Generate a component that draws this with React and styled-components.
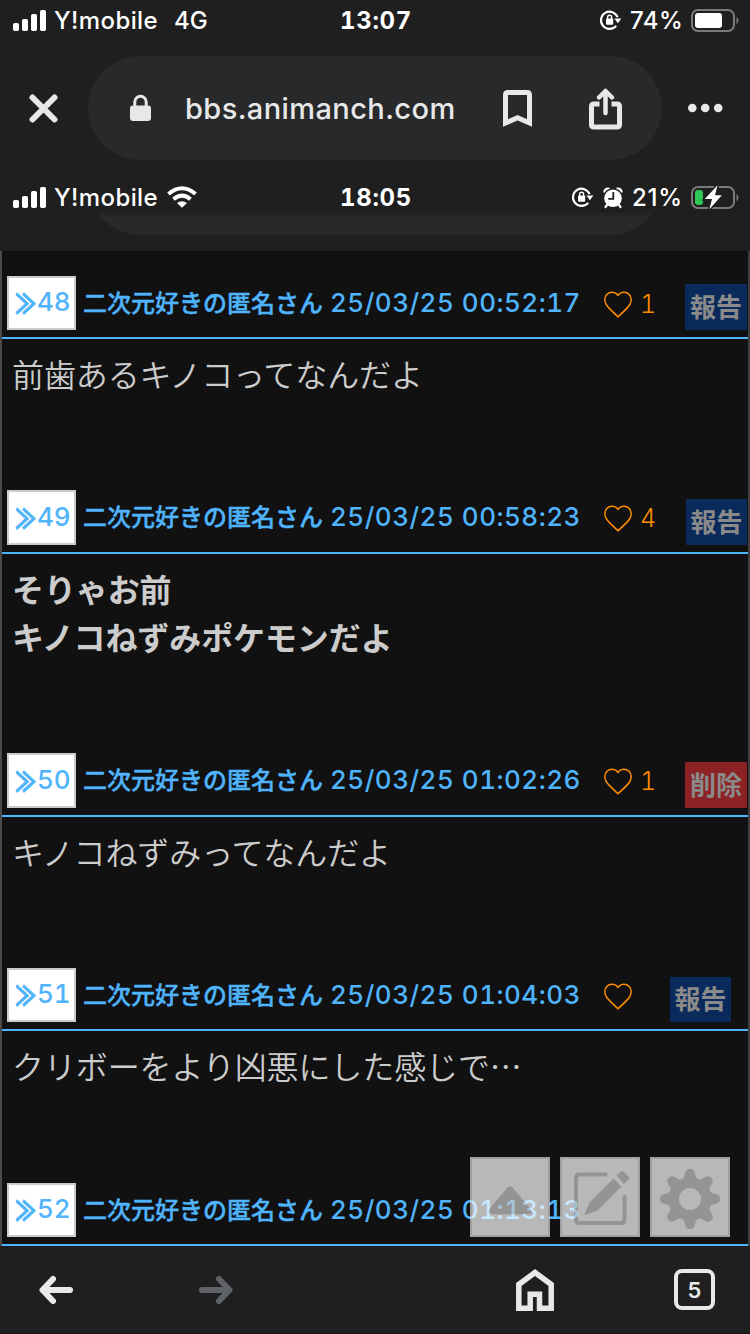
import React from "react";
import styled, { createGlobalStyle } from "styled-components";

const Global = createGlobalStyle`
  * { box-sizing: border-box; }
  html, body { margin: 0; padding: 0; background: #1f1f1f; }
`;

const UI = `Inter, "Liberation Sans", sans-serif`;
const JP = `"Noto Sans CJK JP", sans-serif`;

const Screen = styled.div`
  position: relative;
  display: flex;
  flex-direction: column;
  width: 750px;
  height: 1334px;
  overflow: hidden;
  background: #1f1f1f;
  font-family: ${UI};
`;

const StatusBar = styled.div`
  display: grid;
  grid-template-columns: 1fr auto 1fr;
  align-items: center;
  flex: none;
  height: ${(p) => p.$height}px;
  padding: ${(p) => p.$top || 0}px 11px 0 13px;
  color: #fff;
`;

const StatusGroup = styled.div`
  display: flex;
  align-items: center;
  justify-content: ${(p) => (p.$end ? "flex-end" : "flex-start")};
`;

const StatusText = styled.span`
  width: ${(p) => p.$width}px;
  margin-left: ${(p) => p.$gap || 0}px;
  padding-top: 2px;
  font-size: 24px;
  line-height: 30px;
  font-weight: 500;
  letter-spacing: ${(p) => p.$spacing || 0}px;
  white-space: nowrap;
`;

const Clock = styled.span`
  padding-top: 2px;
  font-size: 24px;
  line-height: 30px;
  font-weight: 700;
  letter-spacing: 0.7px;
  font-variant-numeric: tabular-nums;
`;

const Glyph = styled.svg`
  display: block;
  flex: none;
  margin-left: ${(p) => p.$gap || 0}px;
  overflow: visible;
`;

const Toolbar = styled.div`
  display: flex;
  align-items: center;
  flex: none;
  height: 120px;
  margin-top: 8px;
  margin-bottom: 8px;
  padding: 0 27px 0 28px;
`;

const AddressPill = styled.div`
  display: flex;
  align-items: center;
  flex: none;
  width: 574px;
  height: 104px;
  border-radius: 52px;
  background: #28292b;
  padding: 1px 0 0 42px;
`;

const Address = styled.span`
  width: 272px;
  margin-left: 34px;
  font-size: 29px;
  line-height: 40px;
  font-weight: 500;
  color: #e8e8e8;
  letter-spacing: 0.4px;
  white-space: nowrap;
`;

const PillSliver = styled.div`
  position: relative;
  display: flex;
  align-items: flex-end;
  flex: none;
  height: 26px;
  margin-bottom: 16px;
  padding-left: 88px;
  overflow: hidden;
  &::after {
    content: "";
    position: absolute;
    inset: 0 0 auto 0;
    height: 9px;
    background: linear-gradient(#1f1f1f 20%, rgba(31, 31, 31, 0));
  }
`;

const Thread = styled.main`
  flex: none;
  height: 995px;
  background: #111;
  border-left: 2px solid #4b4b4b;
  border-right: 2px solid #3f3f3f;
  font-family: ${JP};
`;

const PostHeader = styled.header`
  display: flex;
  align-items: flex-start;
  height: ${(p) => p.$height}px;
  padding: 25px 0 0 5px;
  border-bottom: 2px solid #4fb4fb;
`;

const PostNumber = styled.a`
  display: flex;
  align-items: center;
  flex: none;
  width: 69px;
  height: ${(p) => p.$height}px;
  padding: 0 0 2px 6px;
  background: #fff;
  border: 2px solid #ccc;
  color: #4fb4fb;
  font: 500 26px/30px ${UI};
  font-variant-numeric: tabular-nums;
  white-space: nowrap;
`;

const Chevrons = styled.span`
  display: block;
  width: 22px;
  font: 700 21px/30px ${JP};
  -webkit-text-stroke: 0.8px currentColor;
  transform: scale(0.98, 1.3);
`;

const Author = styled.span`
  flex: none;
  width: 247px;
  margin-left: 7px;
  color: #4fb4fb;
  font-size: 24px;
  line-height: 52px;
  font-weight: 500;
  -webkit-text-stroke: 0.4px currentColor;
  white-space: nowrap;
`;

const Stamp = styled.time`
  flex: none;
  width: 274px;
  color: #4fb4fb;
  font: 550 26px/54px ${UI};
  font-variant-numeric: tabular-nums;
  letter-spacing: 0.5px;
  white-space: nowrap;
`;

const Likes = styled.span`
  display: flex;
  flex: none;
  width: ${(p) => p.$width}px;
  padding-top: 15px;
  color: #ff8c00;
  font: 300 25px/27px ${UI};
`;

const LikeCount = styled.span`
  margin-left: 8px;
  font-variant-numeric: tabular-nums;
`;

const Report = styled.button`
  flex: none;
  width: ${(p) => p.$width}px;
  height: ${(p) => p.$height || 46}px;
  margin-top: ${(p) => p.$top}px;
  padding: 0 0 3px;
  border: 0;
  background: ${(p) => (p.$danger ? "#8c2224" : "#0b2a5c")};
  color: #8a8a8a;
  font: 700 26px/42px ${JP};
  white-space: nowrap;
`;

const PostBody = styled.div`
  height: ${(p) => p.$height}px;
  padding: 10px 0 0 10px;
  color: #ccc;
  font-size: 32px;
  line-height: 48px;
  font-weight: ${(p) => (p.$bold ? 700 : 350)};
  letter-spacing: -0.1px;
  white-space: pre-line;
`;

const Floating = styled.div`
  position: absolute;
  left: 470px;
  top: 1157px;
  display: flex;
  gap: 10px;
`;

const FloatButton = styled.button`
  width: 80px;
  height: 80px;
  padding: 0;
  border: 2px solid #ddd;
  background: #fff;
  opacity: 0.7;
`;

const BottomNav = styled.nav`
  display: flex;
  align-items: center;
  flex: none;
  height: 88px;
  padding: 0 35px 0 39px;
  border-bottom: 1px solid #191517;
`;

const Tabs = styled.div`
  width: 41px;
  height: 41px;
  margin-left: 120px;
  border: 4px solid #e8e8e8;
  border-radius: 8px;
  color: #e8e8e8;
  font: 600 22px/34px ${UI};
  text-align: center;
`;

const Signal = () => (
  <Glyph width="33" height="21" fill="#fff">
    <rect x="0" y="13" width="6" height="8" rx="1.7" />
    <rect x="9" y="9" width="6" height="12" rx="1.7" />
    <rect x="18" y="4" width="6" height="17" rx="1.7" />
    <rect x="27" y="0" width="6" height="21" rx="1.7" />
  </Glyph>
);

const Wifi = () => (
  <Glyph $gap={9} width="30" height="22" viewBox="0 0 30 22" fill="none" stroke="#fff" strokeWidth="4">
    <path d="M1.5 8 Q15 -3.5 28.5 8" />
    <path d="M6.5 13.2 Q15 6 23.5 13.2" />
    <path d="M15 21.7 L10 17 Q15 13.4 20 17Z" fill="#fff" stroke="none" />
  </Glyph>
);

const RotationLock = () => (
  <Glyph width="21" height="20" viewBox="0 0 21 20" fill="none">
    <path d="M17.6 7.2 A8.6 8.6 0 1 0 16.2 15.8" stroke="#fff" strokeWidth="2.1" />
    <path d="M14.4 8.4h6.9l-3.4 4.8z" fill="#fff" />
    <rect x="6" y="8.6" width="7.2" height="6.2" rx="1" fill="#fff" />
    <path d="M7.6 9V7.2a2 2 0 0 1 4 0V9" stroke="#fff" strokeWidth="1.4" />
  </Glyph>
);

const Alarm = () => (
  <Glyph $gap={10} width="20" height="21" viewBox="0 0 20 21" fill="none">
    <circle cx="10" cy="11.2" r="8.800" fill="#fff" />
    <path d="M0.300 4.800 Q0.800 0.800 5 0.600 Q6.800 0.600 7 1.600 Q3 2.800 1.300 5.800 Q0.300 6 0.300 4.800ZM19.700 4.800 Q19.200 0.800 15 0.600 Q13.200 0.600 13 1.600 Q17 2.800 18.700 5.800 Q19.700 6 19.700 4.800Z" fill="#fff" />
    <path d="M4 18 2.500 20M16 18 17.500 20" stroke="#fff" strokeWidth="2.200" strokeLinecap="round" />
    <path d="M10.300 5v6.800H5.300" stroke="#1f1f1f" strokeWidth="1.800" />
  </Glyph>
);

const Battery = ({ charging }) => (
  <Glyph $gap={9} width="48" height="23" viewBox="0 0 48 23" fill="none">
    <rect x="1" y="1" width="42" height="21" rx="6" stroke="#7a7a7a" strokeWidth="2" />
    <path d="M45.5 8v7q2-1 2-3.500t-2-3.500z" fill="#7a7a7a" />
    {charging ? (
      <>
        <rect x="4" y="4" width="8" height="15" rx="3" fill="#30c759" />
        <path d="M26.500 -0.700 13.800 13h7.200l-2.700 10.500L30.800 9.200h-6.800z" fill="#fff" stroke="#1f1f1f" strokeWidth="3" paintOrder="stroke" />
      </>
    ) : (
      <rect x="4" y="4" width="27" height="15" rx="3" fill="#fff" />
    )}
  </Glyph>
);

const Heart = () => (
  <Glyph width="28" height="27" viewBox="0 0 28 27" fill="none" stroke="#ff8c00" strokeWidth="1.600">
    <path d="M14 4.200C11.500 0.600 6 0.200 3 3.300C0.300 6.200 0.300 10.500 2.300 13.700C5 18 10.200 22 14 25.800C17.800 22 23 18 25.700 13.700C27.700 10.500 27.700 6.200 25 3.300C22 0.200 16.500 0.600 14 4.200Z" />
  </Glyph>
);

const posts = [
  { no: 48, time: "00:52:17", likes: "1", box: 54, head: 88, w: 81, rw: 62, rt: 8, label: "報告", body: "前歯あるキノコってなんだよ", h: 126 },
  { no: 49, time: "00:58:23", likes: "4", box: 55, head: 89, w: 82, rw: 61, rt: 9, label: "報告", body: "そりゃお前\nキノコねずみポケモンだよ", bold: true, h: 174 },
  { no: 50, time: "01:02:26", likes: "1", box: 55, head: 89, w: 81, rw: 62, rt: 9, label: "削除", danger: true, body: "キノコねずみってなんだよ", h: 126 },
  { no: 51, time: "01:04:03", likes: "", box: 54, head: 88, w: 66, rw: 61, rt: 9, rh: 45, label: "報告", body: "クリボーをより凶悪にした感じで…", h: 127 },
  { no: 52, time: "01:13:13", box: 54, head: 88 },
];

const Post = ({ post }) => (
  <article>
    <PostHeader $height={post.head}>
      <PostNumber $height={post.box}>
        <Chevrons>≫</Chevrons>
        {post.no}
      </PostNumber>
      <Author>二次元好きの匿名さん</Author>
      <Stamp>25/03/25 {post.time}</Stamp>
      {post.label && (
        <>
          <Likes $width={post.w}>
            <Heart />
            <LikeCount>{post.likes}</LikeCount>
          </Likes>
          <Report $width={post.rw} $height={post.rh} $top={post.rt} $danger={post.danger}>
            {post.label}
          </Report>
        </>
      )}
    </PostHeader>
    {post.body && (
      <PostBody $height={post.h} $bold={post.bold}>
        {post.body}
      </PostBody>
    )}
  </article>
);

const gearPath = (() => {
  const pts = [];
  for (let i = 0; i <= 160; i++) {
    const a = (i / 160) * Math.PI * 2;
    const r = 25.8 + 4.2 * Math.tanh(1.5 * Math.cos(8 * a)) / Math.tanh(1.5);
    pts.push(`${(38 + r * Math.cos(a)).toFixed(2)} ${(40 + r * Math.sin(a)).toFixed(2)}`);
  }
  return `M${pts.join("L")}Z M49 40a11 11 0 1 0-22 0a11 11 0 1 0 22 0Z`;
})();

export default function App() {
  return (
    <Screen>
      <Global />
      <StatusBar $height={40}>
        <StatusGroup>
          <Signal />
          <StatusText $gap={8} $width={104} $spacing={0.4}>Y!mobile</StatusText>
          <StatusText $gap={16} $width={34}>4G</StatusText>
        </StatusGroup>
        <Clock>13:07</Clock>
        <StatusGroup $end>
          <RotationLock />
          <StatusText $gap={9} $width={52} $spacing={0.5}>74%</StatusText>
          <Battery />
        </StatusGroup>
      </StatusBar>

      <Toolbar>
        <Glyph width="32" height="31" stroke="#e8e8e8" strokeWidth="6" strokeLinecap="round">
          <path d="M4.500 4.500 26.500 26.500M26.500 4.500 4.500 26.500" />
        </Glyph>
        <Glyph width="28" height="1" />
        <AddressPill>
          <Glyph width="21" height="27" viewBox="0 0 21 27" fill="none">
            <rect x="0" y="10.500" width="21" height="15.500" rx="3" fill="#e8e8e8" />
            <path d="M4.800 12V7a5.700 5.700 0 0 1 11.400 0V12" stroke="#e8e8e8" strokeWidth="3" />
          </Glyph>
          <Address>bbs.animanch.com</Address>
          <Glyph $gap={46} width="29" height="37" viewBox="0 0 29 37" fill="none" stroke="#e8e8e8" strokeWidth="5">
            <path d="M2.500 33V5q0-2.500 2.500-2.500h19q2.500 0 2.500 2.500v28L14.500 27.800z" />
          </Glyph>
          <Glyph $gap={57} width="33" height="42" viewBox="0 0 33 42" fill="none" stroke="#e8e8e8" strokeWidth="5">
            <path d="M10.500 16H5q-2.500 0-2.500 2.500v18q0 2.500 2.500 2.500h23q2.500 0 2.500-2.500v-18q0-2.500-2.500-2.500h-5.500" />
            <path d="M16.500 25V4M10 9.500 16.500 3 23 9.500" strokeWidth="4.500" strokeLinecap="round" strokeLinejoin="round" />
          </Glyph>
        </AddressPill>
        <Glyph $gap={26} width="35" height="10" fill="#e8e8e8">
          <circle cx="4.300" cy="5" r="4.300" />
          <circle cx="17.200" cy="5" r="4.300" />
          <circle cx="30.200" cy="5" r="4.300" />
        </Glyph>
      </Toolbar>

      <StatusBar $height={33} $top={5}>
        <StatusGroup>
          <Signal />
          <StatusText $gap={8} $width={104} $spacing={0.4}>Y!mobile</StatusText>
          <Wifi />
        </StatusGroup>
        <Clock>18:05</Clock>
        <StatusGroup $end>
          <RotationLock />
          <Alarm />
          <StatusText $gap={9} $width={50} $spacing={0.8}>21%</StatusText>
          <Battery charging />
        </StatusGroup>
      </StatusBar>
      <PillSliver>
        <AddressPill />
      </PillSliver>

      <Thread>
        {posts.map((post) => (
          <Post key={post.no} post={post} />
        ))}
      </Thread>

      <BottomNav>
        <Glyph width="34" height="28" viewBox="0 0 34 28" fill="none" stroke="#e8e8e8" strokeWidth="6" strokeLinecap="round" strokeLinejoin="round">
          <path d="M31 14H4M14 3 3.500 14 14 25" />
        </Glyph>
        <Glyph $gap={126} width="34" height="28" viewBox="0 0 34 28" fill="none" stroke="#5f6368" strokeWidth="6" strokeLinecap="round" strokeLinejoin="round">
          <path d="M3 14H30M20 3 30.500 14 20 25" />
        </Glyph>
        <Glyph $gap={283} width="38" height="42" viewBox="0 0 38 42" fill="none" stroke="#e8e8e8" strokeWidth="5.500">
          <path d="M2.800 39.200V15.500L19 3.500 35.200 15.500V39.200H23.500V25.200H14.200V39.200Z" />
        </Glyph>
        <Tabs>5</Tabs>
      </BottomNav>

      <Floating>
        <FloatButton>
          <Glyph width="76" height="76" fill="#ccc">
            <path d="M34.500 29.500q3.500-4 7 0L58.500 50q3 5-2.500 5.200H20q-5.500-.2-2.500-5.200z" />
          </Glyph>
        </FloatButton>
        <FloatButton>
          <Glyph width="76" height="76" fill="none">
            <path d="M43.500 15.500H17.500Q14 15.500 14 19V60.500Q14 64 17.500 64H59Q62.500 64 62.500 60.500V38" stroke="#ccc" strokeWidth="4" strokeLinecap="round" />
            <path d="M51.500 19.500 59.500 27.500 35.500 51.500 24.500 55.500Q22.500 56 23 54L27.500 43.500Z" fill="#ccc" />
            <path d="M54.500 16.500 59 12.500Q60.500 11.500 62 13L66.500 17.500Q67.800 19 66.500 20.500L62 25Z" fill="#ccc" />
          </Glyph>
        </FloatButton>
        <FloatButton>
          <Glyph width="76" height="76" fill="#ccc" fillRule="evenodd">
            <path d={gearPath} />
          </Glyph>
        </FloatButton>
      </Floating>
    </Screen>
  );
}
